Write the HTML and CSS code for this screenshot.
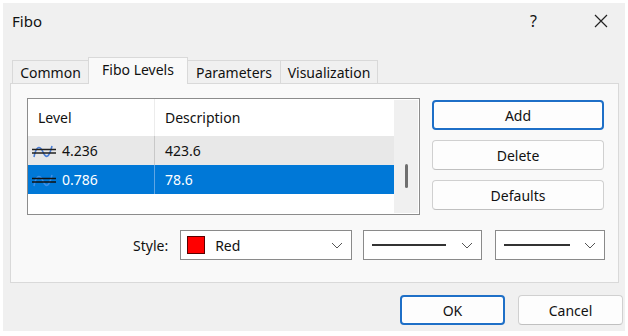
FILE: index.html
```html
<!DOCTYPE html>
<html>
  <head>
    <meta charset="UTF-8">
    <title>Fibo</title>
    <link rel="stylesheet" href="styles.css">
  </head>
  <body>
    <div class="dialog">
      <div class="titlebar">
        <span class="title">Fibo</span>
        <span class="help">?</span>
        <svg class="close" width="14" height="14" viewBox="0 0 14 14"><path d="M1 1 L13 13 M13 1 L1 13" stroke="#222" stroke-width="1.2" fill="none"/></svg>
      </div>
      <div class="tabs">
        <div class="tab t1">Common</div>
        <div class="tab t2 active">Fibo Levels</div>
        <div class="tab t3">Parameters</div>
        <div class="tab t4">Visualization</div>
      </div>
      <div class="panel">
        <div class="top">
          <div class="list">
            <div class="rows">
              <div class="row head">
                <div class="cell c1">Level</div>
                <div class="cell c2">Description</div>
              </div>
              <div class="row grey">
                <div class="cell c1">
                  <svg class="lvl" width="26" height="16" viewBox="0 0 26 16"><path d="M3 14 C5 3, 9 2, 12 9 S18 15, 21 3" stroke="#4a7fd8" stroke-width="1.6" fill="none"/><path d="M1 6.5 H25 M1 10 H25" stroke="#222" stroke-width="1.4"/></svg>
                  4.236
                </div>
                <div class="cell c2">423.6</div>
              </div>
              <div class="row sel">
                <div class="cell c1">
                  <svg class="lvl" width="26" height="16" viewBox="0 0 26 16"><path d="M3 14 C5 3, 9 2, 12 9 S18 15, 21 3" stroke="#3b8fe8" stroke-width="1.6" fill="none"/><path d="M1 6.5 H25 M1 10 H25" stroke="#111" stroke-width="1.4"/></svg>
                  0.786
                </div>
                <div class="cell c2">78.6</div>
              </div>
            </div>
            <div class="scroll"><div class="thumb"></div></div>
          </div>
          <div class="buttons">
            <button class="btn focus">Add</button>
            <button class="btn">Delete</button>
            <button class="btn">Defaults</button>
          </div>
        </div>
        <div class="style-row">
          <span class="label">Style:</span>
          <div class="combo w1">
            <span class="swatch"></span>
            <span class="ctext">Red</span>
            <svg class="chev" width="12" height="7" viewBox="0 0 12 7"><path d="M1 1 L6 6 L11 1" stroke="#555" stroke-width="1" fill="none"/></svg>
          </div>
          <div class="combo w2">
            <span class="line l2"></span>
            <svg class="chev" width="12" height="7" viewBox="0 0 12 7"><path d="M1 1 L6 6 L11 1" stroke="#555" stroke-width="1" fill="none"/></svg>
          </div>
          <div class="combo w3">
            <span class="line l3"></span>
            <svg class="chev" width="12" height="7" viewBox="0 0 12 7"><path d="M1 1 L6 6 L11 1" stroke="#555" stroke-width="1" fill="none"/></svg>
          </div>
        </div>
      </div>
      <div class="footer">
        <button class="btn ok focus">OK</button>
        <button class="btn cancel">Cancel</button>
      </div>
    </div>
  </body>
</html>
```

FILE: styles.css
```css
html {
  font-family: "Noto Sans", "Open Sans", sans-serif;
  font-size: 14px;
  color: #111;
}
body {
  margin: 0;
  background: #fff;
}
.dialog {
  margin: 3px 0 0 3px;
  width: 622px;
  height: 328px;
  background: #f0f0f0;
  display: flex;
  flex-direction: column;
}
.titlebar {
  height: 36px;
  display: flex;
  align-items: center;
  padding: 0 0 0 9px;
}
.title {
  font-size: 15px;
  flex: 1;
}
.help {
  font-size: 16px;
  width: 64px;
}
.close {
  margin-right: 17px;
}
.tabs {
  display: flex;
  align-items: flex-end;
  margin: 15px 0 0 9px;
  height: 29px;
}
.tab {
  box-sizing: border-box;
  height: 23px;
  line-height: 23px;
  text-align: center;
  border: 1px solid #d9d9d9;
  border-bottom: none;
  background: #f0f0f0;
  margin-right: -1px;
}
.t1 { width: 77px; }
.t2 { width: 100px; }
.t3 { width: 94px; }
.t4 { width: 98px; }
.tab.active {
  height: 27px;
  line-height: 24px;
  background: #f9f9f9;
  position: relative;
  z-index: 1;
  margin-bottom: -1px;
}
.panel {
  margin: 0 0 0 7px;
  width: 609px;
  height: 200px;
  box-sizing: border-box;
  border: 1px solid #d9d9d9;
  background: #f9f9f9;
  padding: 14px 0 0 16px;
}
.top {
  display: flex;
  gap: 12px;
}
.list {
  width: 393px;
  height: 117px;
  box-sizing: border-box;
  border: 1px solid #8c8c8c;
  background: #fff;
  display: flex;
}
.rows {
  flex: 1;
}
.row {
  display: flex;
  height: 29px;
  align-items: stretch;
}
.row.head {
  height: 37px;
}
.cell {
  display: flex;
  align-items: center;
  box-sizing: border-box;
}
.c1 {
  width: 127px;
  padding-left: 10px;
  border-right: 1px solid #e3e3e3;
}
.c2 {
  flex: 1;
  padding-left: 10px;
}
.head .c1 {
  border-right-color: #ececec;
}
.row.grey {
  background: #e8e8e8;
}
.row.grey .c1 {
  border-right-color: #c8c8c8;
  padding-left: 3px;
}
.row.sel {
  background: #0078d7;
  color: #fff;
}
.row.sel .c1 {
  border-right-color: #5fa6e4;
  padding-left: 3px;
}
.lvl {
  margin-right: 5px;
}
.scroll {
  width: 24px;
  background: #f0f0f0;
  margin: 1px 1px 1px 0;
  display: flex;
  justify-content: center;
}
.thumb {
  width: 3px;
  height: 24px;
  margin-top: 64px;
  background: #6f6f6f;
  border-radius: 2px;
}
.buttons {
  display: flex;
  flex-direction: column;
  gap: 10px;
  padding-top: 2px;
}
.btn {
  font-family: inherit;
  font-size: 14px;
  color: #111;
  width: 172px;
  height: 30px;
  background: #fdfdfd;
  border: 1px solid #d0d0d0;
  border-bottom-color: #c0c0c0;
  border-radius: 4px;
  padding: 0;
}
.btn.focus {
  border: 2px solid #1e6fc7;
  box-shadow: inset 0 0 0 1px #fff;
}
.style-row {
  display: flex;
  align-items: center;
  margin-top: 15px;
  padding-left: 106px;
}
.label {
  margin-right: 12px;
}
.combo {
  height: 30px;
  box-sizing: border-box;
  border: 1px solid #8a8a8a;
  background: #fff;
  display: flex;
  align-items: center;
  padding-left: 6px;
  position: relative;
}
.w1 { width: 172px; margin-right: 11px; }
.w2 { width: 119px; margin-right: 13px; }
.w3 { width: 110px; }
.swatch {
  width: 18px;
  height: 18px;
  background: #ff0000;
  border: 1px solid #5a0000;
  box-sizing: border-box;
  margin-right: 10px;
}
.ctext {
  flex: 1;
}
.line {
  height: 2px;
  background: #333;
  flex: none;
  margin-left: 2px;
}
.l2 { width: 74px; }
.l3 { width: 66px; }
.chev {
  position: absolute;
  right: 8px;
  top: 11px;
}
.footer {
  display: flex;
  justify-content: flex-end;
  gap: 13px;
  margin-top: 12px;
  padding-right: 2px;
}
.btn.ok {
  width: 105px;
  margin-left: -4px;
}
.btn.cancel {
  width: 105px;
}
```
